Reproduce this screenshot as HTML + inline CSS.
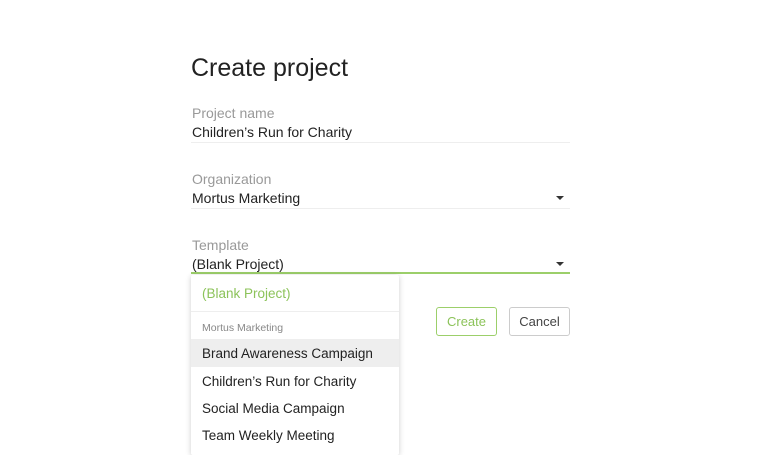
<!DOCTYPE html>
<html><head><meta charset="utf-8"><style>
*{margin:0;padding:0;box-sizing:border-box}
body{width:760px;height:448px;background:#fff;font-family:"Liberation Sans",sans-serif;position:relative;overflow:hidden;color:#222}
.a{position:absolute;white-space:nowrap}
.lbl{font-size:14px;color:#999}
.val{font-size:14px;color:#222}
.line{position:absolute;left:191px;width:379px;height:1px;background:#eee}
.caret{position:absolute;width:0;height:0;border-left:4px solid transparent;border-right:4px solid transparent;border-top:4px solid #333}
.btn{position:absolute;height:29px;border-radius:3px;font-size:13px;text-align:center;line-height:27px;background:#fff}
.dd{position:absolute;left:191px;top:275px;width:208px;height:180px;background:#fff;box-shadow:0 1px 6px rgba(0,0,0,.2);border-radius:2px}
.it{position:absolute;left:11px;font-size:13.5px;color:#222}
</style></head><body>
<div class="a" style="left:191px;top:54px;font-size:25px;color:#222">Create project</div>
<div class="a lbl" style="left:192px;top:105px">Project name</div>
<div class="a val" style="left:192px;top:124px">Children’s Run for Charity</div>
<div class="line" style="top:142px"></div>
<div class="a lbl" style="left:192px;top:171px">Organization</div>
<div class="a val" style="left:192px;top:190px">Mortus Marketing</div>
<div class="caret" style="left:556px;top:196px"></div>
<div class="line" style="top:208px"></div>
<div class="a lbl" style="left:192px;top:237px">Template</div>
<div class="a val" style="left:192px;top:256px">(Blank Project)</div>
<div class="caret" style="left:556px;top:262px"></div>
<div class="line" style="top:272px;height:2px;background:#9ccf6a"></div>
<div class="btn" style="left:436px;top:307px;width:61px;border:1px solid #9ccf6a;color:#8cc35a">Create</div>
<div class="btn" style="left:509px;top:307px;width:61px;border:1px solid #ccc;color:#444">Cancel</div>
<div class="dd">
<div class="it" style="top:11px;color:#8cc35a">(Blank Project)</div>
<div style="position:absolute;left:0;right:0;top:36px;height:1px;background:#eee"></div>
<div class="it" style="top:47px;font-size:10.5px;color:#888">Mortus Marketing</div>
<div style="position:absolute;left:0;right:0;top:64px;height:28px;background:#eee"></div>
<div class="it" style="top:71px">Brand Awareness Campaign</div>
<div class="it" style="top:99px">Children’s Run for Charity</div>
<div class="it" style="top:126px">Social Media Campaign</div>
<div class="it" style="top:153px">Team Weekly Meeting</div>
</div>
</body></html>
